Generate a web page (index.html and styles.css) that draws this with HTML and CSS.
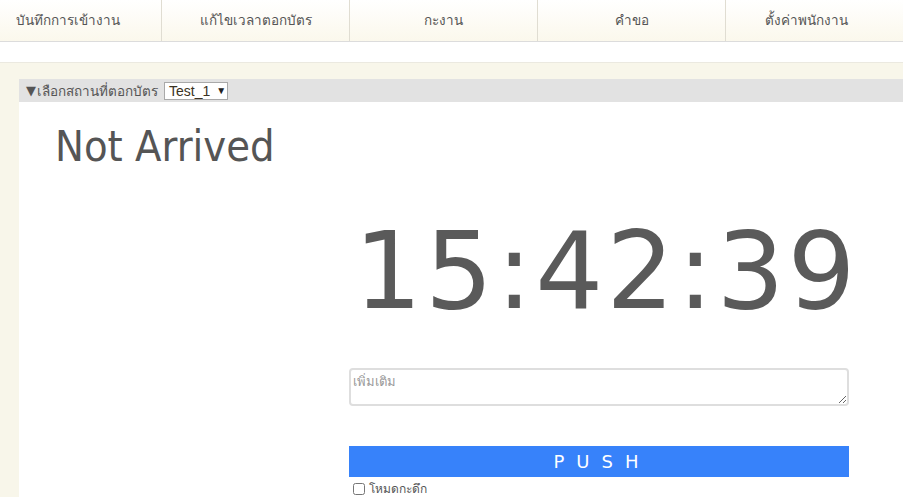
FILE: index.html
```html
<!DOCTYPE html>
<html lang="th">
<head>
<meta charset="utf-8">
<link rel="stylesheet" href="styles.css">
</head>
<body>
<nav class="nav">
  <div class="tab first">บันทึกการเข้างาน</div>
  <div class="tab">แก้ไขเวลาตอกบัตร</div>
  <div class="tab">กะงาน</div>
  <div class="tab">คำขอ</div>
  <div class="tab last">ตั้งค่าพนักงาน</div>
</nav>
<div class="spacer"></div>
<main class="page">
  <div class="toolbar">
    <span class="tri">▼</span><span class="lbl">เลือกสถานที่ตอกบัตร</span>
    <span class="select">Test_1 <span class="arrow">▼</span></span>
  </div>
  <section class="content">
    <h1 class="status">Not Arrived</h1>
    <div class="panel">
      <div class="clock">15:42:39</div>
      <textarea class="note" placeholder="เพิ่มเติม"></textarea>
      <button class="push">PUSH</button>
      <label class="night"><input type="checkbox" class="chk"> โหมดกะดึก</label>
    </div>
  </section>
</main>
</body>
</html>
```
FILE: styles.css
```css
html, body { margin: 0; padding: 0; }
body {
  font-family: Tahoma, "DejaVu Sans", sans-serif;
  background: #fff;
  color: #555;
  overflow: hidden;
  width: 903px;
  height: 497px;
}
.nav {
  display: grid;
  grid-template-columns: 162px 188px 188px 188px 160px 1fr;
  height: 41px;
  border-bottom: 1px solid #dcdcdc;
  background: linear-gradient(#ffffff, #fbf8ec);
}
.tab {
  display: flex;
  align-items: center;
  justify-content: center;
  font-size: 13.5px;
  color: #555;
  border-right: 1px solid #e0ddd2;
  padding-bottom: 1px;
  white-space: nowrap;
}
.tab.first { padding-right: 26px; }
.tab.last { border-right: none; }
.spacer { height: 20px; border-bottom: 1px solid #ebe9e0; }
.page {
  background: #f8f6ea;
  padding: 16px 0 0 19px;
  height: 418px;
}
.toolbar {
  height: 23px;
  background: #e2e2e2;
  display: flex;
  align-items: center;
  padding-left: 7px;
  font-size: 13.5px;
  color: #555;
}
.tri { font-size: 13px; color: #555; margin-right: 1px; }
.select {
  margin-left: 6px;
  height: 18px;
  width: 64px;
  box-sizing: border-box;
  border: 1px solid #a9a9a9;
  background: #fff;
  font-family: "Liberation Sans", Arial, sans-serif;
  font-size: 14px;
  color: #3a3222;
  display: flex;
  align-items: center;
  padding-left: 4px;
}
.arrow { font-size: 10px; margin-left: 6px; color: #222; }
.content {
  background: #fff;
  height: 395px;
  box-sizing: border-box;
  padding-top: 19px;
}
.status {
  margin: 0 0 0 36px;
  font-weight: normal;
  font-size: 43px;
  line-height: 50px;
  color: #555;
  font-stretch: condensed;
}
.panel {
  margin-left: 330px;
  width: 500px;
  display: flex;
  flex-direction: column;
}
.clock {
  font-size: 107px;
  line-height: 120px;
  margin-top: 40px;
  margin-left: 5px;
  color: #5a5a5a;
  letter-spacing: 3px;
  white-space: nowrap;
}
.note {
  margin-top: 37px;
  height: 38px;
  width: 500px;
  box-sizing: border-box;
  border: 2px solid #dedede;
  border-radius: 4px;
  font-family: inherit;
  font-size: 13px;
  padding: 1px 2px;
  resize: vertical;
}
.note::placeholder { color: #999; }
.push {
  margin-top: 40px;
  height: 31px;
  width: 500px;
  border: none;
  background: #3782fa;
  color: #fff;
  font-family: inherit;
  font-size: 18px;
  letter-spacing: 12px;
  padding-left: 12px;
}
.night {
  font-size: 12px;
  color: #555;
  display: flex;
  align-items: center;
  margin-top: 2px;
  margin-left: 4px;
}
.chk { margin: 0 4px 0 0; width: 12px; height: 12px; }
```
